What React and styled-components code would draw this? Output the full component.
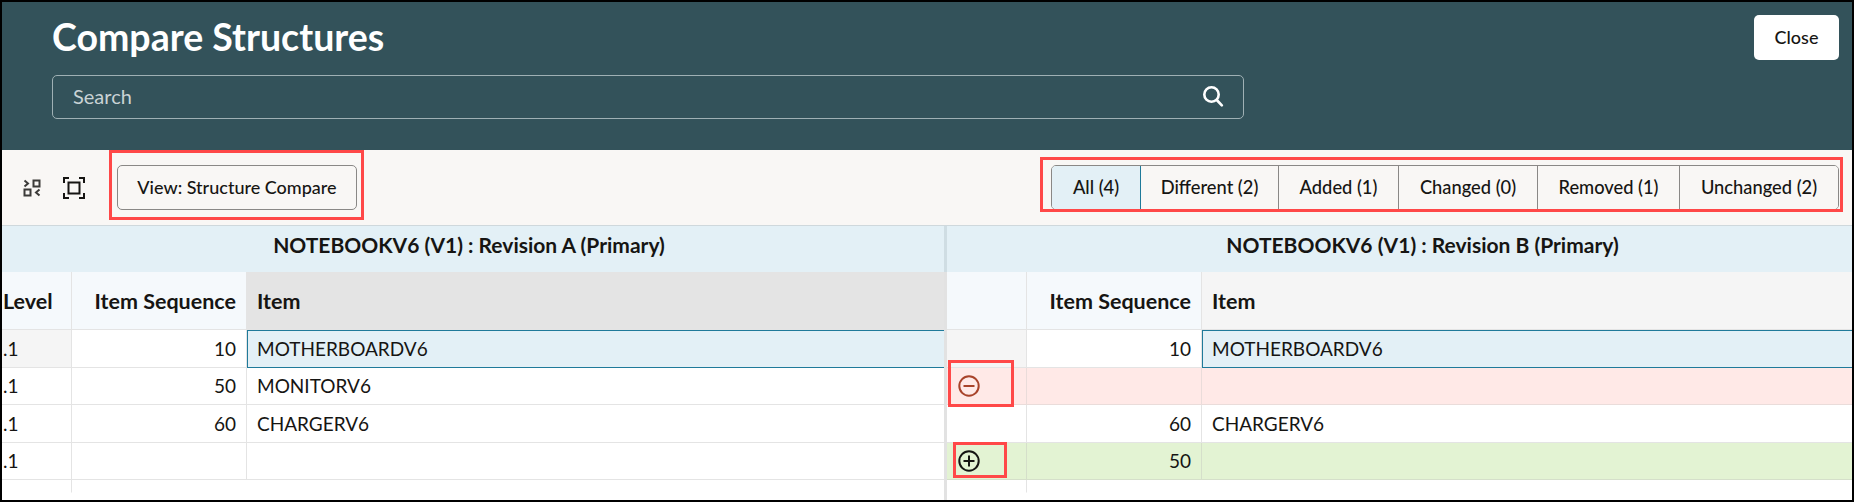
import React from "react";
import styled, { createGlobalStyle } from "styled-components";

const Global = createGlobalStyle`
  html, body { margin: 0; padding: 0; background: #000; }
  * { box-sizing: border-box; }
`;

const Frame = styled.div`
  position: relative;
  width: 1854px;
  height: 502px;
  border: 2px solid #000;
  background: #fff;
  overflow: hidden;
  font-family: "Lato", sans-serif;
  color: #161513;
`;

const Header = styled.header`
  height: 148px;
  background: #33525a;
  padding: 13px 13px 0 50px;
  display: flex;
  justify-content: space-between;
  align-items: flex-start;
`;

const HeaderMain = styled.div`
  width: 1192px;
  display: flex;
  flex-direction: column;
  gap: 9px;
`;

const Title = styled.h1`
  margin: 0;
  height: 51px;
  font-size: 37.5px;
  line-height: 44px;
  font-weight: 700;
  color: #fff;
`;

const SearchBox = styled.div`
  height: 44px;
  border: 1px solid #9fb0b4;
  border-radius: 5px;
  padding: 0 19px 2px 20px;
  display: flex;
  align-items: center;
  justify-content: space-between;
  color: #c9d3d5;
  font-size: 20px;
`;

const CloseButton = styled.button`
  width: 85px;
  height: 45px;
  border: 0;
  border-radius: 5px;
  background: #fff;
  color: #161513;
  padding: 0 0 2px;
  font: 500 18px "Lato", sans-serif;
`;

const Toolbar = styled.div`
  height: 76px;
  background: #f9f7f5;
  border-bottom: 1px solid #cfd8dc;
  padding: 15px 13px 0 21px;
  display: flex;
  align-items: flex-start;
`;

const IconButton = styled.span`
  display: flex;
  align-items: center;
  justify-content: center;
  width: ${(p) => p.$w}px;
  height: 45px;
  color: #161513;
`;

const ViewButton = styled.button`
  margin-left: 11px;
  width: 240px;
  height: 45px;
  border: 1px solid #8a8886;
  border-radius: 5px;
  background: #f9f7f5;
  color: #161513;
  padding: 0 0 2px;
  font: 500 18px "Lato", sans-serif;
`;

const Tabs = styled.div`
  margin-left: auto;
  display: flex;
  height: 45px;
  border: 1px solid #8a8886;
  border-radius: 5px;
  overflow: hidden;
`;

const Tab = styled.div`
  width: ${(p) => p.$w}px;
  display: flex;
  align-items: center;
  justify-content: center;
  padding-bottom: 2px;
  font-size: 18.3px;
  font-weight: 500;
  background: ${(p) => (p.$active ? "#e3f0f6" : "#f9f7f5")};
  border-right: 1px solid ${(p) => (p.$active ? "#1f7a9a" : "#8a8886")};
  &:last-child { border-right: 0; }
`;

const Compare = styled.div`
  display: grid;
  grid-template-columns: 942px 3px 905px;
  height: 274px;
`;

const Panel = styled.section`
  display: flex;
  flex-direction: column;
  min-width: 0;
`;

const Divider = styled.div`
  background: linear-gradient(#cfdde3 0 46px, #e2e2e2 46px);
`;

const PanelTitle = styled.div`
  height: 46px;
  background: #e3f0f6;
  display: flex;
  align-items: center;
  justify-content: center;
  padding: ${(p) => p.$pad};
  font-size: 21px;
  font-weight: 700;
`;

const Row = styled.div`
  display: grid;
  grid-template-columns: ${(p) => p.$cols};
  height: ${(p) => p.$h}px;
`;

const Cell = styled.div`
  display: flex;
  align-items: center;
  min-width: 0;
  white-space: nowrap;
  padding: ${(p) => p.$pad || "0 10px"};
  justify-content: ${(p) => (p.$right ? "flex-end" : "flex-start")};
  background: ${(p) => p.$bg || "transparent"};
  border-right: 1px solid ${(p) => (p.$noRule ? "transparent" : p.$line || "#e4e4e4")};
  border-bottom: 1px solid ${(p) => (p.$noBottom ? "transparent" : p.$line || "#e4e4e4")};
  font-size: 19px;
  line-height: 24px;
  &:last-child { border-right: 0; }
`;

const HeadCell = styled(Cell)`
  font-size: 21.5px;
  font-weight: 700;
  background: ${(p) => p.$bg || "#f5f9fc"};
`;

const SelectedCell = styled(Cell)`
  background: #e3f0f6;
  border-top: 1px solid #1f7a9a;
  border-bottom: 1px solid #1f7a9a;
  border-left: 1px solid #1f7a9a;
  padding-left: 9px;
  border-right: 0;
`;

const Annotation = styled.div`
  position: absolute;
  left: ${(p) => p.$x - 2}px;
  top: ${(p) => p.$y - 2}px;
  width: ${(p) => p.$w}px;
  height: ${(p) => p.$h}px;
  border: 3px solid #ff4848;
  pointer-events: none;
`;

const SearchIcon = () => (
  <svg width="22" height="22" viewBox="0 0 22 22" fill="none" stroke="#fff" strokeWidth="2.6" strokeLinecap="round">
    <circle cx="9.5" cy="9.5" r="7.2" />
    <path d="M14.8 15l5 5.4" />
  </svg>
);

const CollapseIcon = () => (
  <svg width="18" height="18" viewBox="0 0 18 18" fill="none" stroke="#3c3b39" strokeWidth="2">
    <rect x="10.5" y="1.5" width="6" height="6" />
    <rect x="1.5" y="10.5" width="6" height="6" />
    <path d="M1.5 1.5l3.5 3-3.5 3M16.5 10.5l-3.5 3 3.5 3" />
  </svg>
);

const FocusIcon = () => (
  <svg width="22" height="22" viewBox="0 0 22 22" fill="none" stroke="#161513" strokeWidth="2">
    <rect x="5.5" y="5.5" width="11" height="11" />
    <path d="M1 6V1h5M16 1h5v5M21 16v5h-5M6 21H1v-5" />
  </svg>
);

const RoundIcon = ({ color, plus }) => (
  <svg width="22" height="22" viewBox="0 0 22 22" fill="none" stroke={color} strokeWidth="2">
    <circle cx="11" cy="11" r="9.7" />
    <path d="M5.5 11h11" />
    {plus && <path d="M11 5.5v11" />}
  </svg>
);

const tabs = [
  ["All (4)", 89, true],
  ["Different (2)", 138],
  ["Added (1)", 120],
  ["Changed (0)", 139],
  ["Removed (1)", 142],
  ["Unchanged (2)", 158],
];

const leftCols = "70px 175px 1fr";
const rightCols = "80px 175px 1fr";
const rowH = [38, 37, 38, 37];

const leftRows = [
  ["10", "MOTHERBOARDV6"],
  ["50", "MONITORV6"],
  ["60", "CHARGERV6"],
  ["", ""],
];

const rightRows = [
  { seq: "10", item: "MOTHERBOARDV6", first: "#f5f5f5" },
  { seq: "", item: "", bg: "#ffe9e7", line: "#eadcda", icon: "minus" },
  { seq: "60", item: "CHARGERV6" },
  { seq: "50", item: "", bg: "#e3f3d3", line: "#d5dfca", icon: "plus" },
];

export default function App() {
  return (
    <Frame>
      <Global />
      <Header>
        <HeaderMain>
          <Title>Compare Structures</Title>
          <SearchBox>
            Search
            <SearchIcon />
          </SearchBox>
        </HeaderMain>
        <CloseButton>Close</CloseButton>
      </Header>
      <Toolbar>
        <IconButton $w={18}><CollapseIcon /></IconButton>
        <IconButton $w={65}><FocusIcon /></IconButton>
        <ViewButton>View: Structure Compare</ViewButton>
        <Tabs>
          {tabs.map(([label, w, active]) => (
            <Tab key={label} $w={w} $active={active}>{label}</Tab>
          ))}
        </Tabs>
      </Toolbar>
      <Compare>
        <Panel>
          <PanelTitle $pad="0 8px 10px 0">NOTEBOOKV6 (V1) : Revision A (Primary)</PanelTitle>
          <Row $cols={leftCols} $h={58}>
            <HeadCell $pad="0 0 0 1px">Level</HeadCell>
            <HeadCell $right>Item Sequence</HeadCell>
            <HeadCell $bg="#e4e4e4">Item</HeadCell>
          </Row>
          {leftRows.map(([seq, item], i) => (
            <Row key={i} $cols={leftCols} $h={rowH[i]}>
              <Cell $pad="0 0 0 1px" $bg={i === 0 ? "#f5f5f5" : undefined}>.1</Cell>
              <Cell $right>{seq}</Cell>
              {i === 0 ? <SelectedCell>{item}</SelectedCell> : <Cell>{item}</Cell>}
            </Row>
          ))}
          <Row $cols={leftCols} $h={13}>
            <Cell $noBottom />
            <Cell $noBottom $noRule />
            <Cell $noBottom />
          </Row>
        </Panel>
        <Divider />
        <Panel>
          <PanelTitle $pad="0 0 10px 46px">NOTEBOOKV6 (V1) : Revision B (Primary)</PanelTitle>
          <Row $cols={rightCols} $h={58}>
            <HeadCell />
            <HeadCell $right>Item Sequence</HeadCell>
            <HeadCell $bg="#f5f5f5">Item</HeadCell>
          </Row>
          {rightRows.map((r, i) => (
            <Row key={i} $cols={rightCols} $h={rowH[i]}>
              <Cell $pad="0 0 0 11px" $bg={r.first || r.bg} $line={r.line}>
                {r.icon === "minus" && <RoundIcon color="#a8432a" />}
                {r.icon === "plus" && <RoundIcon color="#161513" plus />}
              </Cell>
              <Cell $right $bg={r.bg} $line={r.line}>{r.seq}</Cell>
              {i === 0 ? <SelectedCell>{r.item}</SelectedCell> : <Cell $bg={r.bg} $line={r.line}>{r.item}</Cell>}
            </Row>
          ))}
          <Row $cols={rightCols} $h={13}>
            <Cell $noBottom />
            <Cell $noBottom $noRule />
            <Cell $noBottom />
          </Row>
        </Panel>
      </Compare>
      <Annotation $x={109} $y={150} $w={255} $h={70} />
      <Annotation $x={1040} $y={157} $w={803} $h={55} />
      <Annotation $x={948} $y={360} $w={66} $h={47} />
      <Annotation $x={953} $y={442} $w={54} $h={36} />
    </Frame>
  );
}
